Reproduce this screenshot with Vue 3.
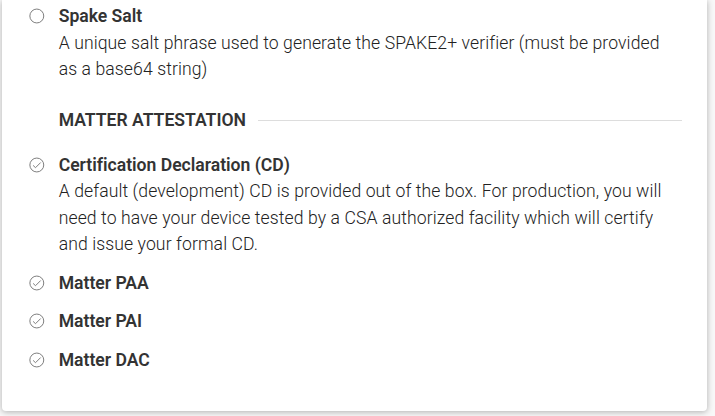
<script setup>
const groups = [
  {
    items: [
      { title: 'Spake Salt', done: false, lines: ['A unique salt phrase used to generate the SPAKE2+ verifier (must be provided', 'as a base64 string)'] },
    ],
  },
  {
    heading: 'MATTER ATTESTATION',
    items: [
      { title: 'Certification Declaration (CD)', done: true, lines: ['A default (development) CD is provided out of the box. For production, you will', 'need to have your device tested by a CSA authorized facility which will certify', 'and issue your formal CD.'] },
      { title: 'Matter PAA', done: true },
      { title: 'Matter PAI', done: true },
      { title: 'Matter DAC', done: true },
    ],
  },
]
</script>

<template>
  <main class="page">
    <section class="card">
      <div v-for="(group, g) in groups" :key="g" class="group">
        <h2 v-if="group.heading" class="heading">{{ group.heading }}</h2>
        <div v-for="item in group.items" :key="item.title" class="item">
          <svg class="icon" viewBox="0 0 16 16" fill="none" stroke="#777" stroke-width="0.95">
            <circle cx="7.8" cy="8" r="6.95" />
            <path v-if="item.done" d="M4.1 8.4 6.5 10.7 11.7 5.5" />
          </svg>
          <div>
            <h3 class="title">{{ item.title }}</h3>
            <p v-for="line in item.lines" :key="line" class="line">{{ line }}</p>
          </div>
        </div>
      </div>
    </section>
  </main>
</template>

<style>
body { margin: 0; background: #f8f8f8; overflow: hidden; }
</style>

<style scoped>
.page { box-sizing: border-box; height: 416px; padding: 0 8px 5px 2px; font-family: Roboto, "Liberation Sans", sans-serif; font-size: 17.6px; font-weight: 300; line-height: 26.4px; color: #333; }
.card { box-sizing: border-box; height: 411px; margin-right: -0.4px; padding: 3.2px 25.4px 0 27px; background: #fff; border-radius: 0 0 4px 4px; box-shadow: 0 1px 6px rgba(0, 0, 0, .3); }
.item { display: flex; gap: 13.7px; margin-bottom: 12.1px; }
.icon { width: 16px; height: 16px; margin-top: 5.2px; flex: none; }
.title, .line, .heading { margin: 0; font-size: 17.6px; white-space: nowrap; }
.title, .heading { font-weight: 600; letter-spacing: -0.02px; }
.line { color: #222; letter-spacing: 0.09px; }
.heading { display: flex; align-items: center; gap: 12px; margin: 24.5px 0 18.65px 29.7px; }
.heading::after { content: ""; flex: 1; height: 1px; margin-top: 1px; background: #ddd; }
</style>
